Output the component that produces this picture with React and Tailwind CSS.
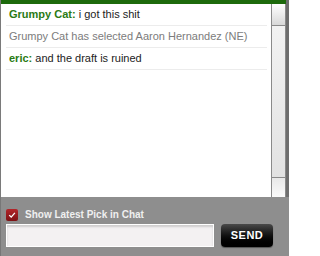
import React from "react";

const messages = [
  { user: "Grumpy Cat", text: "i got this shit" },
  { system: "Grumpy Cat has selected Aaron Hernandez (NE)" },
  { user: "eric", text: "and the draft is ruined" },
];

const ChatBox = () => {
  return (
    <div className="flex h-[256px] w-[289px] flex-col bg-[#8e8e8e] font-['Liberation_Sans',Arial,sans-serif]">
      <div className="flex h-[197px] shrink-0 flex-col border-l border-[#7a7a7a] border-r-[3px] border-r-[#6e6e6e]">
        <div className="h-[4px] shrink-0 bg-[#1d6a0c]" />
        <div className="flex min-h-0 flex-1">
          <div className="flex-1 bg-white pl-[5px] pr-[4px]">
            {messages.map((msg, i) => (
              <div
                key={i}
                className="flex h-[22px] items-center border-b border-[#ececec] px-[3px] text-[11px] leading-none"
              >
                {msg.system ? (
                  <span className="text-[#7c7c7c]">{msg.system}</span>
                ) : (
                  <span className="text-[#222]">
                    <b className="font-bold text-[#2a7a14]">{msg.user}:</b> {msg.text}
                  </span>
                )}
              </div>
            ))}
          </div>
          <div className="flex w-[15px] shrink-0 flex-col border-x border-[#8a8a8a] bg-[#e4e4e4]">
            <div className="h-[22px] shrink-0 border-b border-[#8a8a8a] bg-gradient-to-b from-white to-[#d8d8d8]" />
            <div className="flex-1 bg-gradient-to-b from-[#f2f2f2] to-[#e2e2e2]" />
            <div className="h-[20px] shrink-0 border-t border-[#8a8a8a] bg-gradient-to-b from-[#e8e8e8] to-[#fafafa]" />
          </div>
        </div>
      </div>
      <div className="flex flex-1 flex-col border-l border-[#777] px-[5px] pt-[12px]">
        <label className="flex h-[12px] items-center gap-[7px]">
          <span className="flex h-[12px] w-[12px] items-center justify-center rounded-[2px] bg-gradient-to-b from-[#b3262a] to-[#7d1215]">
            <svg viewBox="0 0 10 10" className="h-[8px] w-[8px]">
              <path d="M1.5 5.2 L4 7.6 L8.6 2.4" fill="none" stroke="white" strokeWidth="1.6" />
            </svg>
          </span>
          <span className="text-[10px] font-bold leading-none text-[#f0f0f0]">Show Latest Pick in Chat</span>
        </label>
        <div className="mt-[3px] flex items-center gap-[7px]">
          <div className="h-[23px] w-[208px] border border-white bg-[#f3f1f2] shadow-[inset_0_2px_2px_rgba(0,0,0,0.15)]" />
          <button
            type="button"
            className="flex h-[23px] w-[52px] items-center justify-center rounded-[4px] bg-gradient-to-b from-[#4a4a4a] via-[#111] to-black text-[11px] font-bold tracking-[0.5px] text-white shadow-[0_1px_1px_rgba(0,0,0,0.4)]"
          >
            SEND
          </button>
        </div>
      </div>
    </div>
  );
};

export default function App() {
  return <ChatBox />;
}
